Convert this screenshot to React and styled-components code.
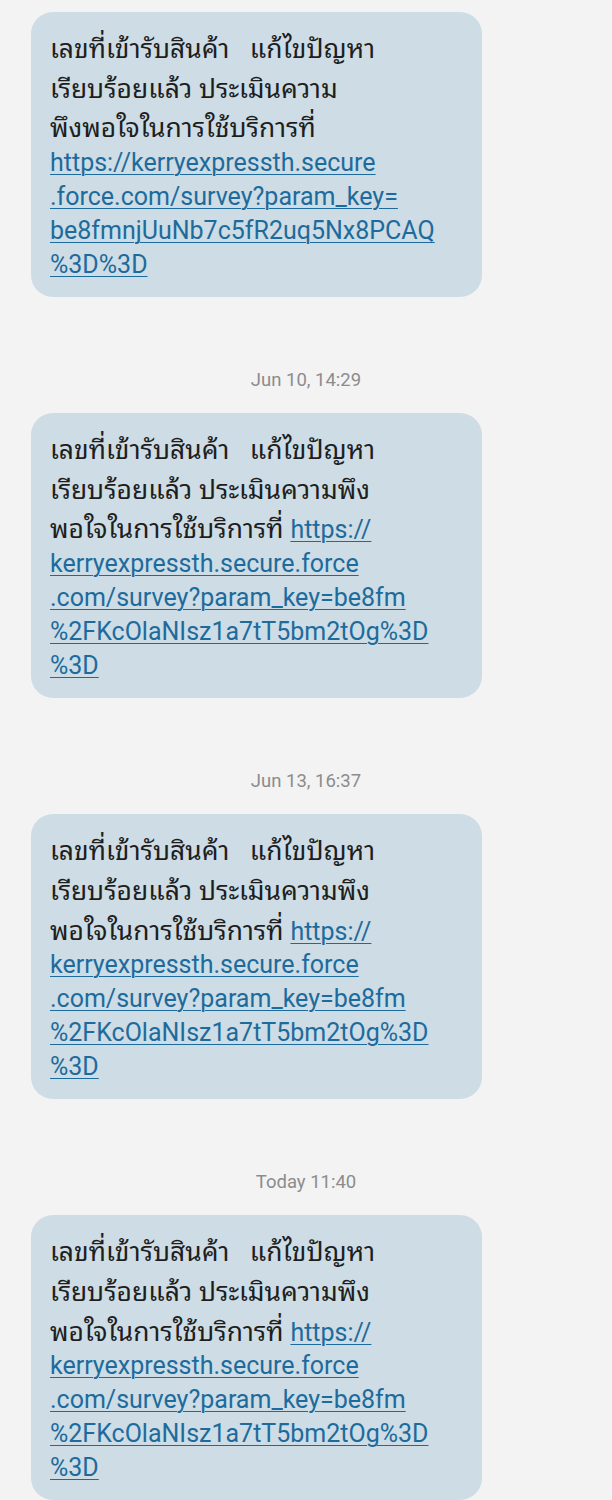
import React from 'react'
import styled, { createGlobalStyle } from 'styled-components'

const GlobalStyle = createGlobalStyle`
  html, body {
    margin: 0;
    padding: 0;
    background: #f3f3f3;
  }
  body {
    font-family: Roboto, "Noto Sans Thai", "Noto Sans", "DejaVu Sans", sans-serif;
  }
`

const Thread = styled.div`
  display: flex;
  flex-direction: column;
  padding: 12px 0 0 31px;
  width: 612px;
  box-sizing: border-box;
`

const Stamp = styled.div`
  align-self: center;
  margin: 73px 0 23px -31px;
  font-size: 18.5px;
  line-height: 20px;
  color: #8c8c8c;
`

const Bubble = styled.div`
  width: 451px;
  box-sizing: border-box;
  padding: 15px 19px 15px;
  background: #cddce5;
  border-radius: 22px;
`

const Line = styled.div`
  height: ${p => (p.$thai ? 39.7 : 34)}px;
  line-height: ${p => (p.$thai ? 39 : 34)}px;
  font-size: 25px;
  color: #1e1e1e;
  white-space: pre;
`

const Thai = styled.span`
  font-family: "Noto Sans Thai Looped", "Noto Serif Thai", "Noto Sans Thai", Roboto, sans-serif;
  font-size: 26.4px;
`

const Link = styled.a`
  color: #1d6b9c;
  text-decoration: underline;
  text-decoration-thickness: 1px;
  text-underline-offset: 3px;
`

const first = [
  { text: 'เลขที่เข้ารับสินค้า   แก้ไขปัญหา', thai: true },
  { text: 'เรียบร้อยแล้ว ประเมินความ', thai: true },
  { text: 'พึงพอใจในการใช้บริการที่', thai: true },
  { link: 'https://kerryexpressth.secure' },
  { link: '.force.com/survey?param_key=' },
  { link: 'be8fmnjUuNb7c5fR2uq5Nx8PCAQ' },
  { link: '%3D%3D' },
]

const repeat = [
  { text: 'เลขที่เข้ารับสินค้า   แก้ไขปัญหา', thai: true },
  { text: 'เรียบร้อยแล้ว ประเมินความพึง', thai: true },
  { text: 'พอใจในการใช้บริการที่ ', link: 'https://', thai: true },
  { link: 'kerryexpressth.secure.force' },
  { link: '.com/survey?param_key=be8fm' },
  { link: '%2FKcOlaNIsz1a7tT5bm2tOg%3D' },
  { link: '%3D' },
]

const messages = [
  { time: null, lines: first },
  { time: 'Jun 10, 14:29', lines: repeat },
  { time: 'Jun 13, 16:37', lines: repeat },
  { time: 'Today 11:40', lines: repeat },
]

const Message = ({ time, lines }) => (
  <>
    {time && <Stamp>{time}</Stamp>}
    <Bubble>
      {lines.map((l, i) => (
        <Line key={i} $thai={l.thai}>
          {l.text && <Thai>{l.text}</Thai>}
          {l.link && <Link href="#">{l.link}</Link>}
        </Line>
      ))}
    </Bubble>
  </>
)

const App = () => (
  <>
    <GlobalStyle />
    <Thread>
      {messages.map((m, i) => (
        <Message key={i} {...m} />
      ))}
    </Thread>
  </>
)

export default App
